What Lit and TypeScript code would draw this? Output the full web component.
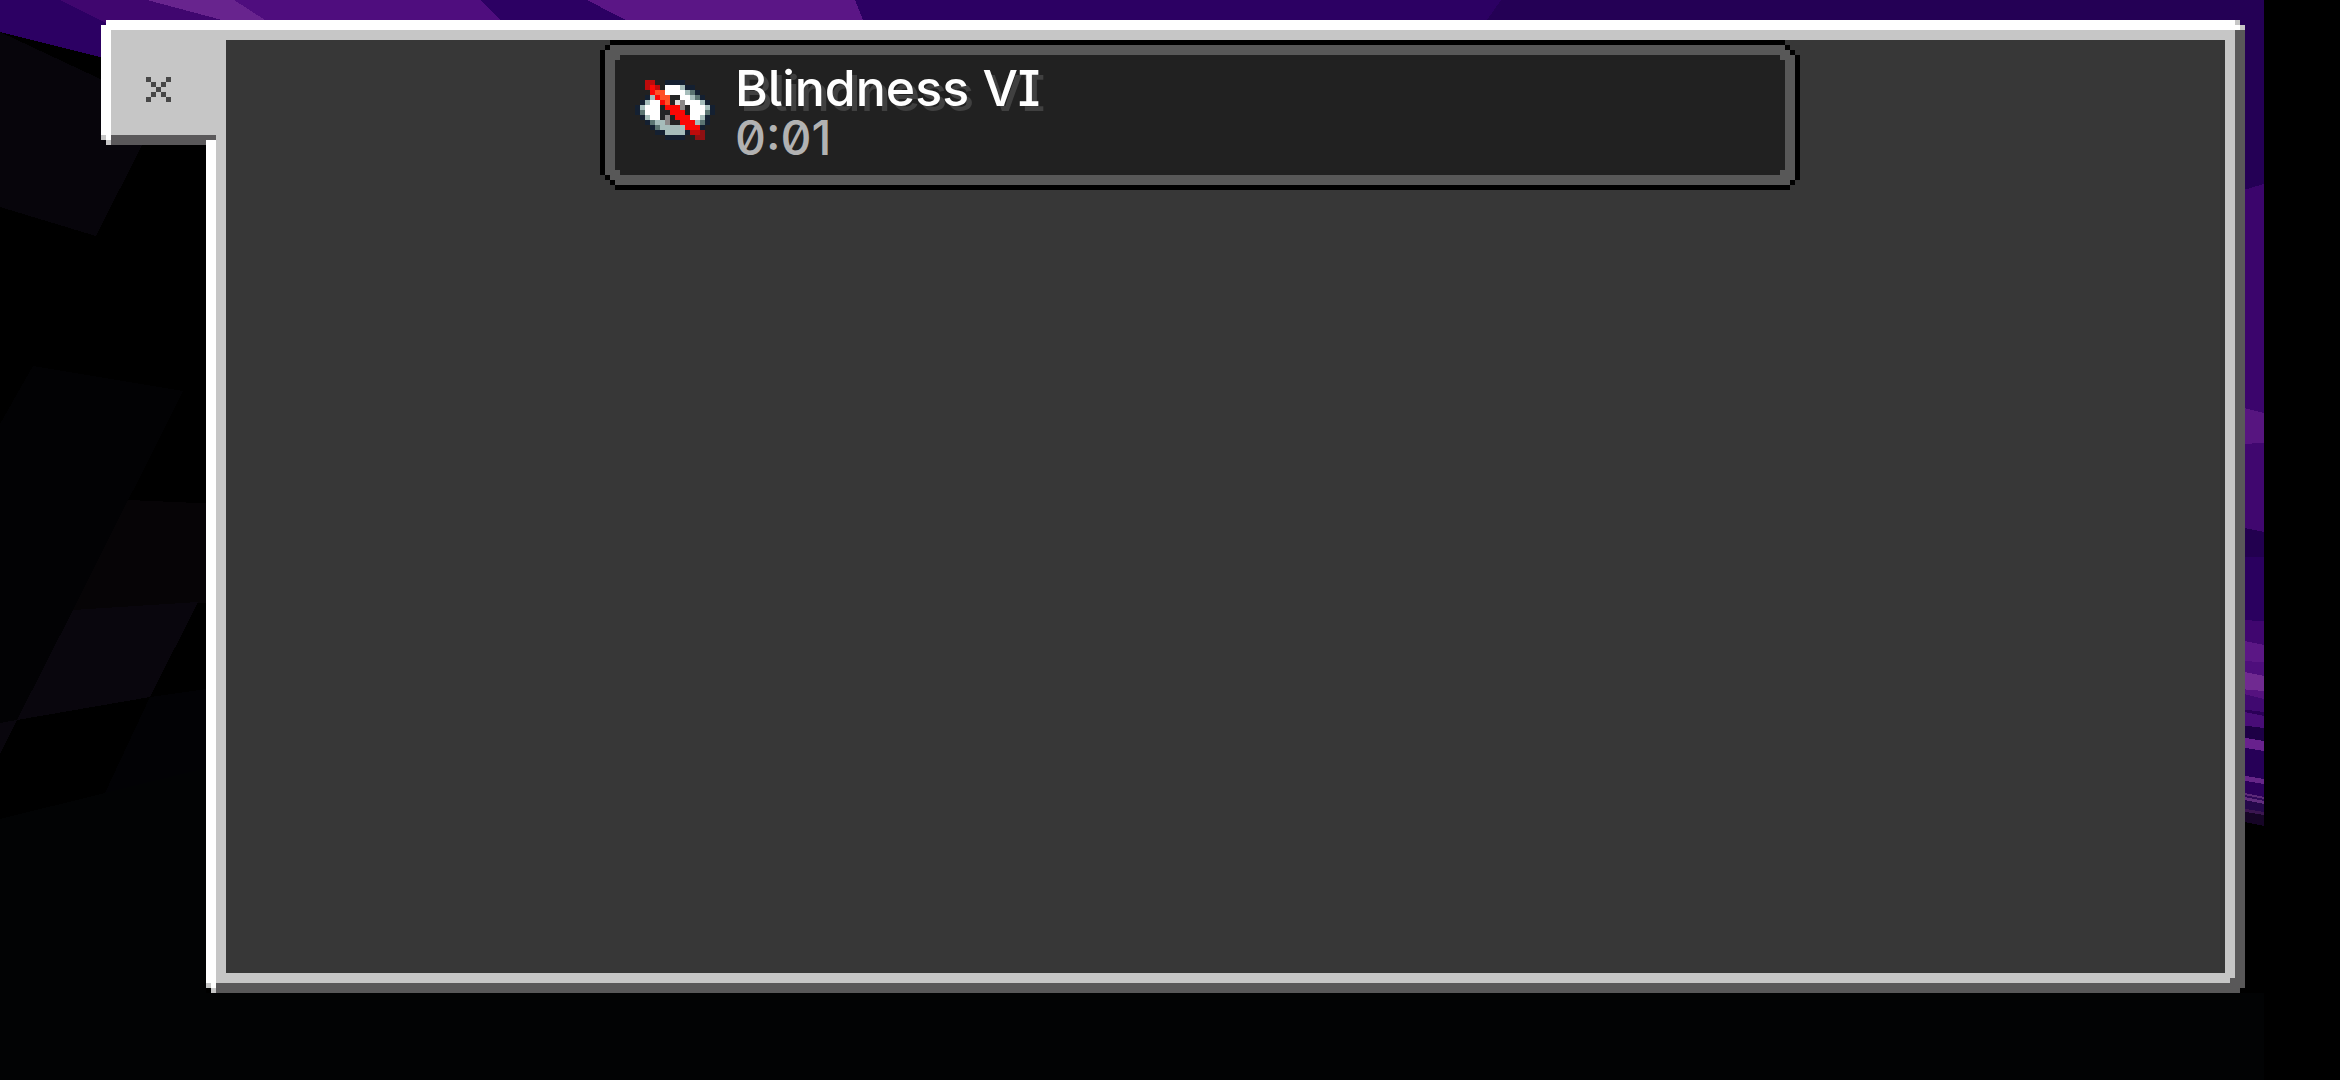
import { LitElement, html, svg, css } from "lit";
import { customElement, property } from "lit/decorators.js";

type Shape = [points: string, fill: string];

/* Faceted scenery behind the window, drawn on a 2340 x 1080 field. */
const SCENERY: Shape[] = [
  ["0,0 2264,0 2264,600 0,32", "#2c0063"],
  ["1501,0 2264,0 2264,200 1487,200 1487,20", "#240055"],
  ["60,0 147,0 222,20 300,60 180,60", "#40066f"],
  ["147,0 234,0 265,20 222,20", "#68248e"],
  ["234,0 480,0 500,20 500,60 265,60 265,20", "#4f0d7e"],
  ["480,0 587,0 664,20 660,60 500,60 500,20", "#2c0063"],
  ["587,0 855,0 863,20 863,40 664,40", "#5b1686"],
  ["0,32 101,79 300,170 2264,600 2264,1080 0,1080", "#000000"],
  ["0,32 160,107 142,145 96,236 0,207", "#07050b"],
  ["33,366 183,391 73,610 17,720 0,723 0,424", "#020204"],
  ["128,500 220,504 220,602 73,610", "#060406"],
  ["73,610 198,602 150,697 17,720", "#09060d"],
  ["0,723 17,720 0,754", "#09060d"],
  ["150,697 206,689 206,768 105,793", "#020205"],
  ["0,819 206,768 206,993 2264,993 2264,1080 0,1080", "#020304"],
];

const EDGE: Shape[] = [
  ["2240,0 2264,0 2264,184 2240,191", "#240055"],
  ["2240,191 2264,184 2264,413 2240,407", "#3b056c"],
  ["2240,407 2264,413 2264,443 2240,444", "#571580"],
  ["2240,444 2264,443 2264,532 2240,527", "#40076f"],
  ["2240,527 2264,532 2264,557 2240,557", "#22004f"],
  ["2240,557 2264,557 2264,621 2240,620", "#2a005f"],
  ["2240,620 2264,621 2264,645 2240,640", "#40066f"],
  ["2240,640 2264,645 2264,662 2240,661", "#5b1785"],
  ["2240,661 2264,662 2264,676 2240,671", "#4e0e7c"],
  ["2240,671 2264,676 2264,691 2240,689", "#702a91"],
  ["2240,689 2264,691 2264,699 2240,693", "#55127f"],
  ["2240,693 2264,699 2264,712 2240,709", "#400970"],
  ["2240,709 2264,712 2264,716 2240,711", "#2b0058"],
  ["2240,711 2264,716 2264,728 2240,725", "#480d77"],
  ["2240,725 2264,728 2264,741 2240,737", "#1d0045"],
  ["2240,737 2264,741 2264,751 2240,747", "#68218d"],
  ["2240,747 2264,751 2264,779 2240,775", "#260057"],
  ["2240,775 2264,779 2264,784 2240,780", "#652588"],
  ["2240,780 2264,784 2264,797 2240,792", "#2c005b"],
  ["2240,792 2264,797 2264,799 2240,794", "#5c2a78"],
  ["2240,794 2264,799 2264,801 2240,796", "#30085a"],
  ["2240,796 2264,801 2264,804 2240,799", "#612d7d"],
  ["2240,799 2264,804 2264,812 2240,808", "#25084a"],
  ["2240,808 2264,812 2264,815 2240,811", "#3b1650"],
  ["2240,811 2264,815 2264,826 2240,821", "#160526"],
];

const INK: Record<string, string> = {
  D: "#142031",
  W: "#ffffff",
  L: "#a6bdbb",
  G: "#5b7472",
  R: "#fb0805",
  r: "#bd0b0b",
  m: "#8e1012",
  O: "#ff5128",
  K: "#232425",
  g: "#8b8888",
  e: "#dcdcdc",
  x: "#474747",
};

const BLIND_EYE = [
  "..rr..DDDD......",
  "..rRr.WWWLDD....",
  "...ROOWWWWLGD...",
  "..DLROOKKWWLGD..",
  ".DLWWROKegWWWLD.",
  "DLWWWKRRRgKWWWLD",
  "DGWWWKKRRRKWWWGD",
  ".DLWWKgKRRRWWLD.",
  "..DGLLgKKRRRLGD.",
  "...DGLLLLLRRRD..",
  "....DDLLLLDrrm..",
  "......DDDD..mm..",
];

const CROSS = ["x...x", ".x.x.", "..x..", ".x.x.", "x...x"];

@customElement("pixel-art")
export class PixelArt extends LitElement {
  @property({ attribute: false }) rows: string[] = [];

  static styles = css`
    :host {
      display: block;
    }
    .art {
      display: block;
      width: 100%;
      height: auto;
    }
  `;

  render() {
    const width = this.rows[0]?.length ?? 1;
    return html`<svg
      class="art"
      viewBox="0 0 ${width} ${this.rows.length}"
      shape-rendering="crispEdges"
      aria-hidden="true"
    >
      ${this.rows.map((row, y) =>
        [...row].map((cell, x) =>
          INK[cell]
            ? svg`<rect x=${x} y=${y} width="1" height="1" fill=${INK[cell]}></rect>`
            : null,
        ),
      )}
    </svg>`;
  }
}

@customElement("effect-card")
export class EffectCard extends LitElement {
  @property() name = "";
  @property() time = "";

  static styles = css`
    :host {
      display: block;
      background: #000;
      padding: 5px;
      clip-path: polygon(
        10px 0, calc(100% - 15px) 0, calc(100% - 15px) 5px, calc(100% - 10px) 5px,
        calc(100% - 10px) 10px, calc(100% - 5px) 10px, calc(100% - 5px) 15px, 100% 15px,
        100% calc(100% - 10px), calc(100% - 5px) calc(100% - 10px),
        calc(100% - 5px) calc(100% - 5px), calc(100% - 10px) calc(100% - 5px),
        calc(100% - 10px) 100%, 15px 100%, 15px calc(100% - 5px), 10px calc(100% - 5px),
        10px calc(100% - 10px), 5px calc(100% - 10px), 5px calc(100% - 15px),
        0 calc(100% - 15px), 0 10px, 5px 10px, 5px 5px, 10px 5px
      );
    }
    .rim {
      background: #585858;
      padding: 10px;
      clip-path: polygon(
        5px 0, calc(100% - 10px) 0, calc(100% - 10px) 5px, calc(100% - 5px) 5px,
        calc(100% - 5px) 10px, 100% 10px, 100% calc(100% - 5px),
        calc(100% - 5px) calc(100% - 5px), calc(100% - 5px) 100%, 10px 100%,
        10px calc(100% - 5px), 5px calc(100% - 5px), 5px calc(100% - 10px),
        0 calc(100% - 10px), 0 5px, 5px 5px
      );
    }
    .body {
      display: flex;
      gap: 20px;
      align-items: flex-start;
      background: #212121;
      padding: 8px 20px 12px;
      clip-path: polygon(
        5px 0, calc(100% - 5px) 0, calc(100% - 5px) 5px, 100% 5px,
        100% calc(100% - 5px), calc(100% - 5px) calc(100% - 5px),
        calc(100% - 5px) 100%, 5px 100%, 5px calc(100% - 5px),
        0 calc(100% - 5px), 0 5px, 5px 5px
      );
    }
    .icon {
      flex: none;
      width: 80px;
      margin-top: 17px;
    }
    .text {
      min-width: 0;
      font-family: Inter, sans-serif;
      line-height: 50px;
      font-weight: 500;
      font-feature-settings: "zero" 1, "ss02" 1, "cv05" 1, "cv08" 1;
    }
    .name,
    .time {
      margin: 0;
      font-weight: inherit;
    }
    .name {
      font-size: 50px;
      color: #fff;
      text-shadow: 5px 5px 0 #404040;
    }
    .time {
      font-size: 48px;
      color: #b2b2b2;
    }
  `;

  render() {
    return html`<div class="rim">
      <div class="body">
        <pixel-art class="icon" .rows=${BLIND_EYE}></pixel-art>
        <div class="text">
          <h2 class="name">${this.name}</h2>
          <p class="time">${this.time}</p>
        </div>
      </div>
    </div>`;
  }
}

@customElement("app-root")
export class AppRoot extends LitElement {
  static styles = css`
    :host {
      display: block;
      background: #000;
    }
    .screen {
      position: relative;
      box-sizing: border-box;
      display: flex;
      min-height: 100vh;
      padding: 20px 95px 87px 101px;
      overflow: hidden;
    }
    .scenery {
      position: absolute;
      inset: 0;
      width: 100%;
      height: 100%;
    }
    .tab,
    .window {
      position: relative;
    }
    .tab {
      flex: none;
      display: flex;
      justify-content: center;
      align-items: center;
      z-index: 1;
      width: 115px;
      height: 125px;
      margin: 0 -10px 0 0;
      padding: 14px 0 0;
      border: 0;
      cursor: pointer;
      background:
        linear-gradient(#c6c6c6, #c6c6c6) 0 115px / 5px 5px no-repeat,
        linear-gradient(#c6c6c6, #c6c6c6) 5px 120px / 5px 5px no-repeat,
        linear-gradient(#fff, #fff) 0 0 / 100% 10px no-repeat,
        linear-gradient(#fff, #fff) 0 0 / 10px 120px no-repeat,
        linear-gradient(#5a585a, #5a585a) 0 100% / 100% 10px no-repeat,
        #c6c6c6;
      clip-path: polygon(
        5px 0, 100% 0, 100% 120px, 105px 120px, 105px 100%,
        5px 100%, 5px 120px, 0 120px, 0 5px, 5px 5px
      );
    }
    .cross {
      width: 25px;
    }
    .window {
      flex: 1;
      min-width: 0;
      display: flex;
      padding: 20px;
      background:
        linear-gradient(#c6c6c6, #c6c6c6) calc(100% - 5px) 0 / 5px 5px no-repeat,
        linear-gradient(#c6c6c6, #c6c6c6) 100% 5px / 5px 5px no-repeat,
        linear-gradient(#fff, #fff) 0 0 / 100% 10px no-repeat,
        linear-gradient(#c6c6c6, #c6c6c6) 0 calc(100% - 5px) / 5px 5px no-repeat,
        linear-gradient(#c6c6c6, #c6c6c6) 5px 100% / 5px 5px no-repeat,
        linear-gradient(#fff, #fff) 0 0 / 10px 100% no-repeat,
        linear-gradient(#595859, #595859) 100% 0 / 10px 100% no-repeat,
        linear-gradient(#595859, #595859) 0 100% / 100% 10px no-repeat,
        linear-gradient(#595859, #595859) calc(100% - 10px) calc(100% - 10px) / 5px 5px no-repeat,
        #c6c6c6;
      clip-path: polygon(
        0 0, calc(100% - 5px) 0, calc(100% - 5px) 5px, 100% 5px,
        100% calc(100% - 5px), calc(100% - 5px) calc(100% - 5px),
        calc(100% - 5px) 100%, 5px 100%, 5px calc(100% - 5px), 0 calc(100% - 5px)
      );
    }
    .effects {
      flex: 1;
      display: flex;
      flex-direction: column;
      align-items: center;
      margin: 0;
      padding: 0 51px 0 0;
      list-style: none;
      background: #373737;
    }
    .effect {
      width: 90%;
      max-width: 1200px;
    }
  `;

  private shapes(list: Shape[]) {
    return list.map(([points, fill]) => svg`<polygon points=${points} fill=${fill}></polygon>`);
  }

  render() {
    return html`<main class="screen">
      <svg
        class="scenery"
        viewBox="0 0 2340 1080"
        preserveAspectRatio="none"
        shape-rendering="crispEdges"
        aria-hidden="true"
      >
        ${this.shapes(SCENERY)}${this.shapes(EDGE)}
      </svg>
      <button class="tab" type="button" aria-label="Close">
        <pixel-art class="cross" .rows=${CROSS}></pixel-art>
      </button>
      <section class="window">
        <ul class="effects">
          <li class="effect">
            <effect-card name="Blindness VI" time="0:01"></effect-card>
          </li>
        </ul>
      </section>
    </main>`;
  }
}
